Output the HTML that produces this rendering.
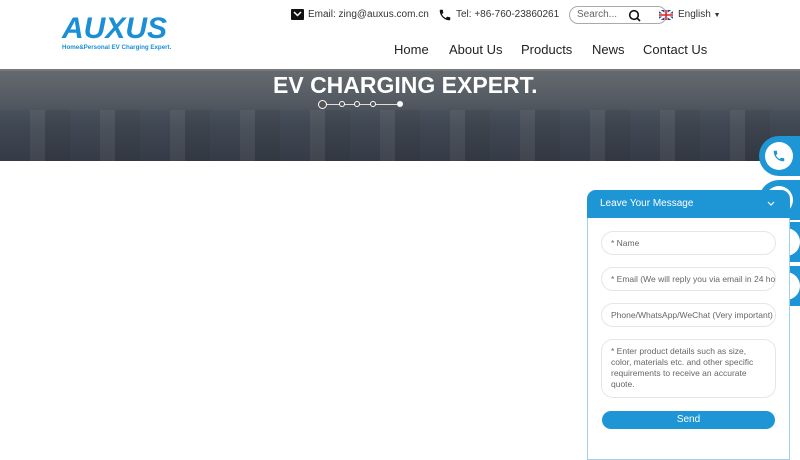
<!DOCTYPE html>
<html><head><meta charset="utf-8"><style>
*{margin:0;padding:0;box-sizing:border-box}
body{width:800px;height:450px;overflow:hidden;background:#fff;font-family:"Liberation Sans",sans-serif;position:relative}
.abs{position:absolute}
.top{font-size:10px;color:#333;top:9px;white-space:nowrap}
.nav{top:42px;font-size:13px;color:#222}
.banner{top:69px;left:0;width:800px;height:92px;background:linear-gradient(180deg,#666b70 0%,#545a62 35%,#444a54 60%,#363b44 100%)}
.field{position:absolute;left:601px;width:175px;height:24px;border:1px solid #e6e6e6;border-radius:12px;font-size:8.5px;color:#666;padding:0 9px;line-height:22px;white-space:nowrap;overflow:hidden}
</style></head><body>
<div class="abs" style="left:62px;top:14px;font-weight:bold;font-style:italic;font-size:30px;color:#1a8fd6;letter-spacing:0px;line-height:30px">AUXUS</div>
<div class="abs" style="left:62px;top:44px;font-size:6.2px;color:#1a8fd6;font-weight:bold;white-space:nowrap">Home&amp;Personal EV Charging Expert.</div>
<div class="abs" style="left:291px;top:9px;width:13px;height:11px;background:#111;border-radius:1px"></div>
<svg class="abs" style="left:291px;top:9px" width="13" height="11"><path d="M3 3 L6.5 6.5 L10 3" stroke="#fff" stroke-width="1.5" fill="none"/></svg>
<div class="abs top" style="left:308px">Email: zing@auxus.com.cn</div>
<svg class="abs" style="left:438px;top:8px" width="14" height="14" viewBox="0 0 24 24"><path d="M6.6 10.8c1.4 2.8 3.8 5.1 6.6 6.6l2.2-2.2c.3-.3.7-.4 1-.2 1.1.4 2.3.6 3.6.6.6 0 1 .4 1 1V20c0 .6-.4 1-1 1C10.6 21 3 13.4 3 4c0-.6.4-1 1-1h3.5c.6 0 1 .4 1 1 0 1.3.2 2.5.6 3.6.1.3 0 .7-.2 1z" fill="#111"/></svg>
<div class="abs top" style="left:456px">Tel: +86-760-23860261</div>
<div class="abs" style="left:569px;top:6px;width:98px;height:18px;border:1px solid #aaa;border-radius:9px;font-size:10px;color:#666;padding-left:7px;line-height:16px">Search...</div>
<svg class="abs" style="left:628px;top:9px" width="13" height="13"><circle cx="6" cy="6" r="4.3" stroke="#111" stroke-width="1.6" fill="none"/><path d="M9 9 L12 12" stroke="#111" stroke-width="1.6"/></svg>
<svg class="abs" style="left:659px;top:10px" width="14" height="10"><rect width="14" height="10" fill="#243f8f"/><path d="M0 0L14 10M14 0L0 10" stroke="#fff" stroke-width="2"/><path d="M7 0V10M0 5H14" stroke="#fff" stroke-width="3"/><path d="M7 0V10M0 5H14" stroke="#d22" stroke-width="1.6"/></svg>
<div class="abs top" style="left:678px">English <span style="font-size:7px">▼</span></div>
<div class="abs nav" style="left:394px">Home</div>
<div class="abs nav" style="left:449px">About Us</div>
<div class="abs nav" style="left:521px">Products</div>
<div class="abs nav" style="left:592px">News</div>
<div class="abs nav" style="left:643px">Contact Us</div>
<div class="abs banner"></div>
<div class="abs" style="left:0;top:69px;width:800px;height:2px;background:#777"></div>
<div class="abs" style="left:0;top:110px;width:800px;height:51px;background:repeating-linear-gradient(90deg,rgba(40,60,90,.12) 0 30px,rgba(150,160,170,.1) 30px 45px,rgba(20,30,40,.12) 45px 70px)"></div>
<div class="abs" style="left:273px;top:72px;font-size:23px;font-weight:bold;color:#fff;white-space:nowrap">EV CHARGING EXPERT.</div>
<div class="abs" style="left:320px;top:104px;width:82px;height:1px;background:#ddd"></div>
<div class="abs" style="left:318px;top:100px;width:9px;height:9px;border:1px solid #fff;border-radius:50%;background:#555"></div>
<div class="abs" style="left:339px;top:101px;width:6px;height:6px;border:1px solid #fff;border-radius:50%;background:#555"></div>
<div class="abs" style="left:354px;top:101px;width:6px;height:6px;border:1px solid #fff;border-radius:50%;background:#555"></div>
<div class="abs" style="left:370px;top:101px;width:6px;height:6px;border:1px solid #fff;border-radius:50%;background:#555"></div>
<div class="abs" style="left:397px;top:101px;width:6px;height:6px;border-radius:50%;background:#fff"></div>
<div class="abs" style="left:759px;top:136px;width:60px;height:40px;background:#1e96d6;border-radius:20px 0 0 20px"></div>
<div class="abs" style="left:765px;top:142px;width:28px;height:28px;background:#fff;border-radius:50%"></div>
<svg class="abs" style="left:772px;top:149px" width="14" height="14" viewBox="0 0 24 24"><path d="M6.6 10.8c1.4 2.8 3.8 5.1 6.6 6.6l2.2-2.2c.3-.3.7-.4 1-.2 1.1.4 2.3.6 3.6.6.6 0 1 .4 1 1V20c0 .6-.4 1-1 1C10.6 21 3 13.4 3 4c0-.6.4-1 1-1h3.5c.6 0 1 .4 1 1 0 1.3.2 2.5.6 3.6.1.3 0 .7-.2 1z" fill="#1e96d6"/></svg>
<div class="abs" style="left:759px;top:180px;width:60px;height:40px;background:#1e96d6;border-radius:20px 0 0 20px"></div>
<div class="abs" style="left:765px;top:186px;width:28px;height:28px;background:#fff;border-radius:50%"></div>
<div class="abs" style="left:770px;top:222px;width:40px;height:40px;background:#1e96d6"></div>
<div class="abs" style="left:772px;top:228px;width:28px;height:28px;background:#fff;border-radius:50%"></div>
<div class="abs" style="left:770px;top:266px;width:40px;height:40px;background:#1e96d6"></div>
<div class="abs" style="left:772px;top:272px;width:28px;height:28px;background:#fff;border-radius:50%"></div>
<div class="abs" style="left:587px;top:190px;width:203px;height:270px;background:#fff;border:1px solid #9fd0ef;border-radius:9px 9px 0 0"></div>
<div class="abs" style="left:587px;top:190px;width:203px;height:28px;background:#1e96d6;border-radius:9px 9px 0 0;color:#fff;font-size:10px;padding:8px 0 0 13px">Leave Your Message</div>
<svg class="abs" style="left:767px;top:201px" width="8" height="6"><path d="M1 1L4 4L7 1" stroke="#fff" stroke-width="1.2" fill="none"/></svg>
<div class="field" style="top:231px">* Name</div>
<div class="field" style="top:267px">* Email (We will reply you via email in 24 hours)</div>
<div class="field" style="top:303px">Phone/WhatsApp/WeChat (Very important)</div>
<div class="field" style="top:339px;height:59px;white-space:normal;line-height:11px;padding-top:6px">* Enter product details such as size, color, materials etc. and other specific requirements to receive an accurate quote.</div>
<div class="abs" style="left:602px;top:411px;width:173px;height:18px;background:#1e96d6;border-radius:9px;color:#fff;font-size:10px;text-align:center;line-height:18px">Send</div>
</body></html>
